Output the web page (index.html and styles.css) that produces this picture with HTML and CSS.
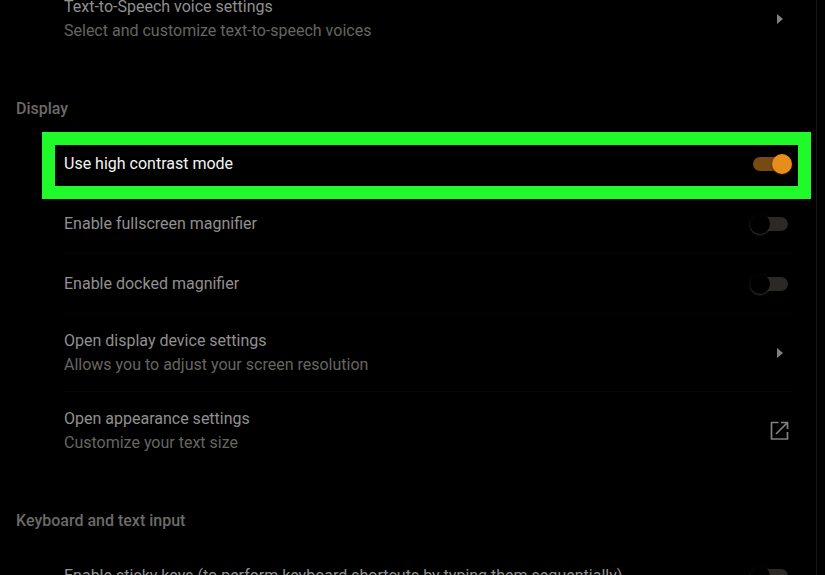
FILE: index.html
```html
<!DOCTYPE html>
<html lang="en">
<head>
<meta charset="utf-8">
<title>Accessibility settings</title>
<link rel="stylesheet" href="styles.css">
</head>
<body>
<main class="page">
  <div class="rows scrolled">
    <div class="row tall">
      <div class="text"><span class="label">Text-to-Speech voice settings</span><span class="hint">Select and customize text-to-speech voices</span></div>
      <button class="icon" type="button" aria-label="Text-to-Speech voice settings"><svg viewBox="0 0 24 24"><path d="M9 7l6 5-6 5z" fill="currentColor"/></svg></button>
    </div>
  </div>

  <h2 class="heading">Display</h2>
  <div class="rows">
    <div class="row highlighted">
      <label class="label" for="contrast">Use high contrast mode</label>
      <input class="toggle" type="checkbox" id="contrast" checked>
    </div>
    <div class="row">
      <label class="label" for="fullscreen">Enable fullscreen magnifier</label>
      <input class="toggle" type="checkbox" id="fullscreen">
    </div>
    <div class="row">
      <label class="label" for="docked">Enable docked magnifier</label>
      <input class="toggle" type="checkbox" id="docked">
    </div>
    <div class="row tall">
      <div class="text"><span class="label">Open display device settings</span><span class="hint">Allows you to adjust your screen resolution</span></div>
      <button class="icon" type="button" aria-label="Open display device settings"><svg viewBox="0 0 24 24"><path d="M9 7l6 5-6 5z" fill="currentColor"/></svg></button>
    </div>
    <div class="row tall">
      <div class="text"><span class="label">Open appearance settings</span><span class="hint">Customize your text size</span></div>
      <button class="icon" type="button" aria-label="Open appearance settings"><svg viewBox="0 0 24 24" fill="none" stroke="currentColor" stroke-width="1.700" stroke-linejoin="round"><path d="M10.500 3.500H3.500v16.500H19.500V13"/><path d="M13 3.500h6.500v6.500M19.500 3.500L8 15" stroke-linejoin="miter"/></svg></button>
    </div>
  </div>

  <h2 class="heading">Keyboard and text input</h2>
  <div class="rows">
    <div class="row">
      <label class="label" for="sticky">Enable sticky keys (to perform keyboard shortcuts by typing them sequentially)</label>
      <input class="toggle" type="checkbox" id="sticky">
    </div>
  </div>
</main>
</body>
</html>
```
FILE: styles.css
```css
* {
  box-sizing: border-box;
}

body {
  margin: 0;
  height: 100vh;
  overflow: hidden;
  background: #000;
  font: 16px/24px Roboto, "Liberation Sans", sans-serif;
}

.page {
  display: flow-root;
  min-height: 100vh;
  margin-right: 8px;
  padding: 0 24px 0 16px;
  border-right: 1px solid #161616;
}

/* The list above is partly scrolled out of view. */
.scrolled {
  margin-top: -20px;
}

.heading {
  margin: 0;
  padding: 39px 0 13px;
  color: #6b6b68;
  font-size: 16px;
  font-weight: 500;
}

.rows {
  padding-left: 48px;
}

.row {
  position: relative;
  display: flex;
  align-items: center;
  justify-content: space-between;
  min-height: 60px;
  border-bottom: 1px solid #060606;
}

.row.tall {
  min-height: 78px;
}

.row:last-child {
  border-bottom-color: transparent;
}

.text {
  display: flex;
  flex-direction: column;
}

.label {
  color: #909090;
}

.hint {
  color: #666661;
}

.highlighted .label {
  color: #f4f4f4;
}

.highlighted::after {
  content: "";
  position: absolute;
  inset: -2px -19px -6px -22px;
  border: 13px solid #20fa2b;
  pointer-events: none;
}

.icon {
  width: 24px;
  height: 24px;
  padding: 0;
  border: 0;
  background: none;
  color: #808080;
}

.icon svg {
  display: block;
}

.toggle {
  appearance: none;
  position: relative;
  flex: none;
  width: 42px;
  height: 20px;
  margin: 0;
}

.toggle::before {
  content: "";
  position: absolute;
  inset: 3px 4px 3px 3px;
  border-radius: 7px;
  background: #2c2825;
}

.toggle::after {
  content: "";
  position: absolute;
  top: 0;
  left: 0;
  width: 20px;
  height: 20px;
  border-radius: 50%;
  background: #000;
  box-shadow: 0 1px 2px #3a3633;
}

.toggle:checked::before {
  background: #774a10;
}

.toggle:checked::after {
  left: 22px;
  background: #e68e1b;
  box-shadow: 0 1px 2px #3a2408;
}
```
